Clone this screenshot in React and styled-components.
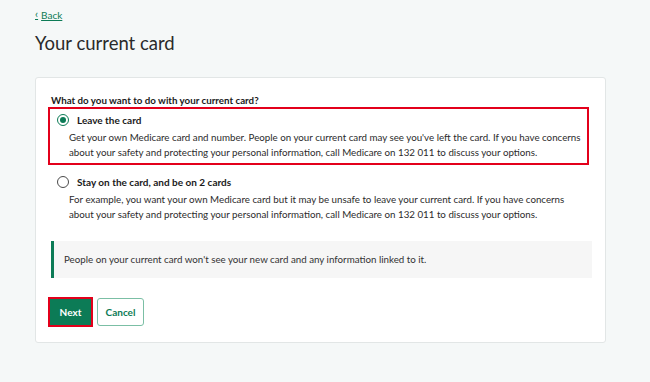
import React, { useState } from 'react';
import styled, { createGlobalStyle } from 'styled-components';

const GlobalStyle = createGlobalStyle`
  html, body {
    margin: 0;
    padding: 0;
    background: #f5f8f8;
  }
  body {
    font-family: Lato, 'Open Sans', sans-serif;
    color: #1f1f1f;
  }
`;

const options = [
  {
    id: 'leave',
    label: 'Leave the card',
    text: "Get your own Medicare card and number. People on your current card may see you've left the card. If you have concerns about your safety and protecting your personal information, call Medicare on 132 011 to discuss your options.",
  },
  {
    id: 'stay',
    label: 'Stay on the card, and be on 2 cards',
    text: 'For example, you want your own Medicare card but it may be unsafe to leave your current card. If you have concerns about your safety and protecting your personal information, call Medicare on 132 011 to discuss your options.',
  },
];

const App = () => {
  const [choice, setChoice] = useState('leave');

  return (
    <Page>
      <GlobalStyle />
      <BackLink href="#">
        <Chevron>‹</Chevron>
        <span>Back</span>
      </BackLink>
      <Title>Your current card</Title>
      <Card>
        <Question>What do you want to do with your current card?</Question>
        <Options>
          {options.map((opt) => (
            <Option
              key={opt.id}
              $highlight={opt.id === 'leave'}
              onClick={() => setChoice(opt.id)}
            >
              <OptionHead>
                <Radio $checked={choice === opt.id} />
                <OptionLabel>{opt.label}</OptionLabel>
              </OptionHead>
              <OptionText>{opt.text}</OptionText>
            </Option>
          ))}
        </Options>
        <Notice>
          People on your current card won't see your new card and any information linked to it.
        </Notice>
        <Actions>
          <PrimaryButton>Next</PrimaryButton>
          <SecondaryButton>Cancel</SecondaryButton>
        </Actions>
      </Card>
    </Page>
  );
};

const Page = styled.div`
  padding: 2px 44px 20px 35px;
  min-height: 382px;
  box-sizing: border-box;
`;

const BackLink = styled.a`
  display: inline-flex;
  align-items: center;
  gap: 3px;
  color: #0c7b56;
  font-size: 10px;
  line-height: 14px;
  text-decoration: none;
  span {
    text-decoration: underline;
  }
`;

const Chevron = styled.span`
  font-size: 11px;
  line-height: 11px;
  margin-top: -2px;
`;

const Title = styled.h1`
  margin: 8px 0 0 0;
  font-size: 18.5px;
  font-weight: 400;
  line-height: 26px;
  color: #2a2a2a;
`;

const Card = styled.div`
  margin-top: 21px;
  background: #ffffff;
  border: 1px solid #e2e6e6;
  border-radius: 3px;
  padding: 15px 14px 16px 12px;
`;

const Question = styled.div`
  font-size: 9.75px;
  font-weight: 700;
  line-height: 14px;
  margin-left: 3px;
  color: #1a1a1a;
`;

const Options = styled.div`
  display: flex;
  flex-direction: column;
  gap: 4px;
`;

const Option = styled.div`
  width: 541px;
  box-sizing: border-box;
  border: 2px solid ${(p) => (p.$highlight ? '#e3001b' : 'transparent')};
  padding: 2px 6px 3px 7px;
  cursor: pointer;
`;

const OptionHead = styled.div`
  display: flex;
  align-items: center;
  gap: 8px;
  height: 18px;
`;

const Radio = styled.span`
  width: 10px;
  height: 10px;
  border-radius: 50%;
  border: 1px solid ${(p) => (p.$checked ? '#0c7b56' : '#4a4a4a')};
  display: flex;
  align-items: center;
  justify-content: center;
  &::after {
    content: '';
    width: 6px;
    height: 6px;
    border-radius: 50%;
    background: ${(p) => (p.$checked ? '#0c7b56' : 'transparent')};
  }
`;

const OptionLabel = styled.span`
  font-size: 10px;
  font-weight: 700;
  color: #1a1a1a;
`;

const OptionText = styled.p`
  margin: 1px 0 0 12px;
  max-width: 516px;
  font-size: 9.75px;
  line-height: 15px;
  color: #2b2b2b;
`;

const Notice = styled.div`
  margin-top: 14px;
  margin-left: 3px;
  width: 541px;
  box-sizing: border-box;
  background: #f6f6f6;
  border-left: 3px solid #0c7b56;
  padding: 11px 12px 11px 10px;
  font-size: 9.75px;
  line-height: 15px;
  color: #333333;
`;

const Actions = styled.div`
  display: flex;
  align-items: center;
  gap: 4px;
  margin-top: 20px;
`;

const PrimaryButton = styled.button`
  font-family: Lato, 'Open Sans', sans-serif;
  font-size: 10px;
  font-weight: 700;
  color: #ffffff;
  background: #0c7b56;
  border: none;
  outline: 2px solid #e3001b;
  outline-offset: 0;
  width: 41px;
  height: 26px;
  margin-left: 2px;
  cursor: pointer;
`;

const SecondaryButton = styled.button`
  font-family: Lato, 'Open Sans', sans-serif;
  font-size: 10px;
  font-weight: 700;
  color: #0c7b56;
  background: #ffffff;
  border: 1px solid #7bbfa5;
  border-radius: 3px;
  width: 47px;
  height: 28px;
  margin-left: 2px;
  cursor: pointer;
`;

export default App;
